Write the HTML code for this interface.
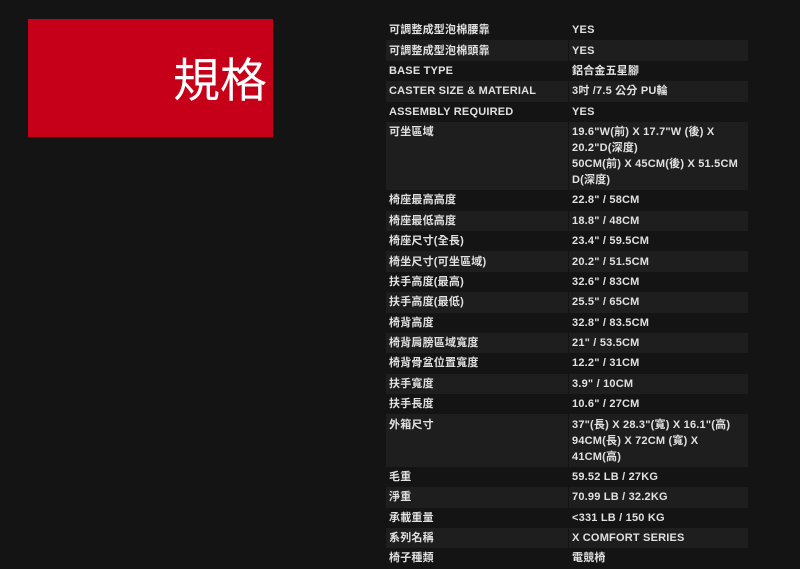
<!DOCTYPE html>
<html><head><meta charset="utf-8"><style>
body{margin:0;background:#141414;width:800px;height:566px;overflow:hidden;font-family:"Liberation Sans","Noto Sans CJK TC",sans-serif;}
.red{position:absolute;left:28px;top:19px;width:245px;height:118px;background:#c50018;}
.red span{position:absolute;right:6px;top:28px;color:#fff;font-size:47px;line-height:60px;font-family:"Noto Sans CJK TC",sans-serif;}
table{position:absolute;left:386px;top:20px;width:362px;border-collapse:collapse;}
td{font-size:11px;font-weight:bold;color:#e0e0e0;line-height:16px;padding:2.2px 3px 2.2px 3px;vertical-align:top;letter-spacing:0.2px;white-space:nowrap;}
td:first-child{width:176px;border-right:1px solid #141414;}
tr:nth-child(even) td{background:#1e1e1e;}
</style></head><body>
<div class="red"><span>規格</span></div>
<table>
<tr><td>可調整成型泡棉腰靠</td><td>YES</td></tr>
<tr><td>可調整成型泡棉頭靠</td><td>YES</td></tr>
<tr><td>BASE TYPE</td><td>鋁合金五星腳</td></tr>
<tr><td>CASTER SIZE &amp; MATERIAL</td><td>3吋 /7.5 公分 PU輪</td></tr>
<tr><td>ASSEMBLY REQUIRED</td><td>YES</td></tr>
<tr><td>可坐區域</td><td>19.6"W(前) X 17.7"W (後) X<br>20.2"D(深度)<br>50CM(前) X 45CM(後) X 51.5CM<br>D(深度)</td></tr>
<tr><td>椅座最高高度</td><td>22.8" / 58CM</td></tr>
<tr><td>椅座最低高度</td><td>18.8" / 48CM</td></tr>
<tr><td>椅座尺寸(全長)</td><td>23.4" / 59.5CM</td></tr>
<tr><td>椅坐尺寸(可坐區域)</td><td>20.2" / 51.5CM</td></tr>
<tr><td>扶手高度(最高)</td><td>32.6" / 83CM</td></tr>
<tr><td>扶手高度(最低)</td><td>25.5" / 65CM</td></tr>
<tr><td>椅背高度</td><td>32.8" / 83.5CM</td></tr>
<tr><td>椅背肩膀區域寬度</td><td>21" / 53.5CM</td></tr>
<tr><td>椅背骨盆位置寬度</td><td>12.2" / 31CM</td></tr>
<tr><td>扶手寬度</td><td>3.9" / 10CM</td></tr>
<tr><td>扶手長度</td><td>10.6" / 27CM</td></tr>
<tr><td>外箱尺寸</td><td>37"(長) X 28.3"(寬) X 16.1"(高)<br>94CM(長) X 72CM (寬) X<br>41CM(高)</td></tr>
<tr><td>毛重</td><td>59.52 LB / 27KG</td></tr>
<tr><td>淨重</td><td>70.99 LB / 32.2KG</td></tr>
<tr><td>承載重量</td><td>&lt;331 LB / 150 KG</td></tr>
<tr><td>系列名稱</td><td>X COMFORT SERIES</td></tr>
<tr><td>椅子種類</td><td>電競椅</td></tr>
</table>
</body></html>
